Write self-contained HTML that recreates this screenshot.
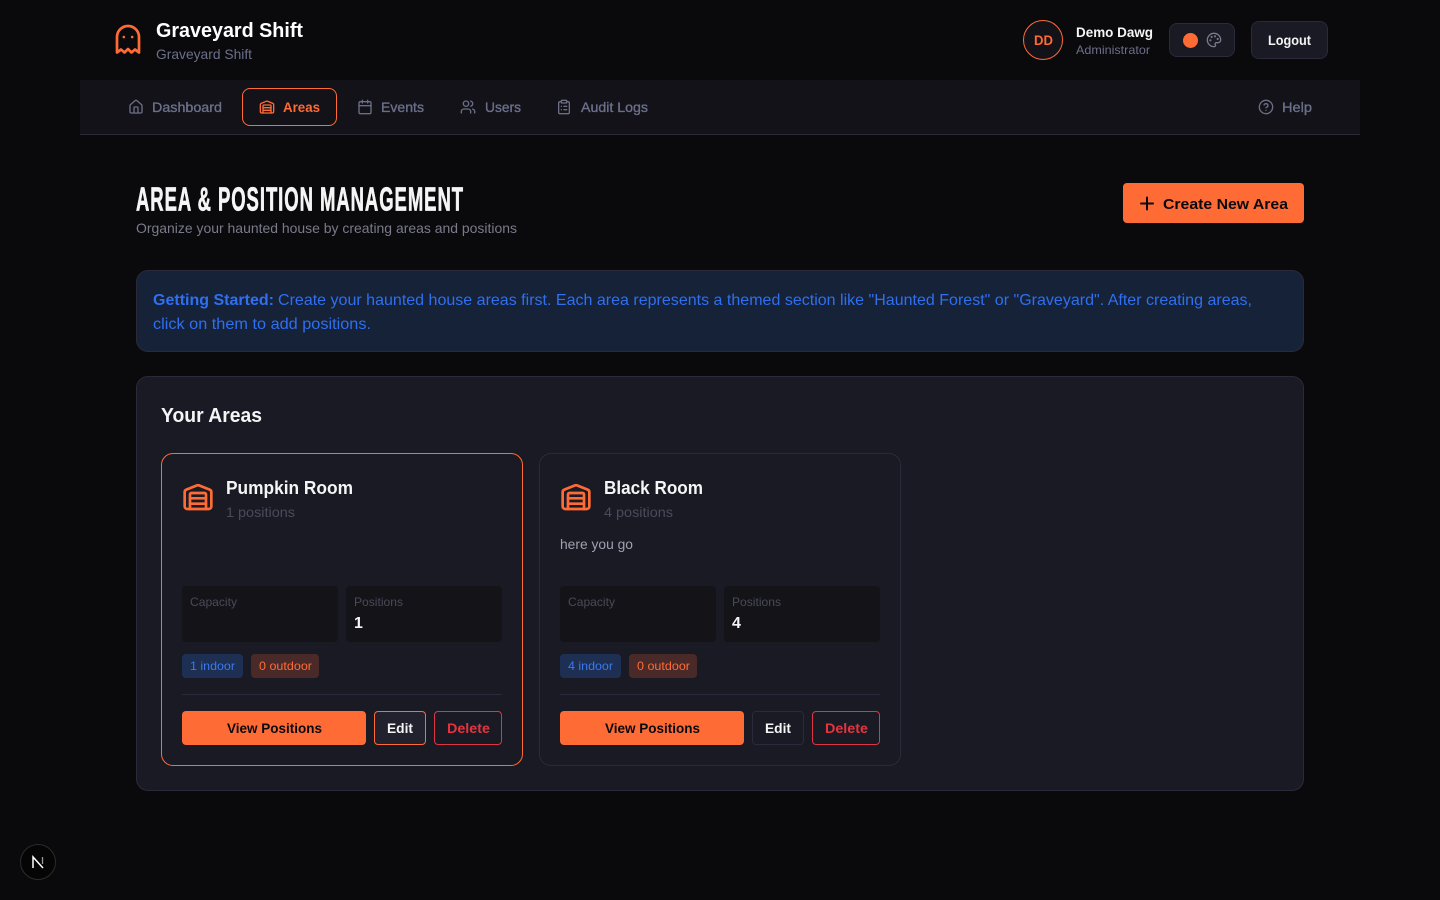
<!DOCTYPE html>
<html lang="en">
<head>
<meta charset="utf-8">
<title>Area &amp; Position Management - Graveyard Shift</title>
<style>
html,body{margin:0;padding:0;width:1440px;height:900px;overflow:hidden;background:#0a0a0c;font-family:"Liberation Sans",sans-serif}
.b{position:absolute;box-sizing:border-box}
svg{position:absolute;left:0;top:0}
text{font-family:"Liberation Sans",sans-serif;font-size:14px;white-space:pre}
.m{stroke-width:.35px}
.i{fill:none;stroke-width:2;stroke-linecap:round;stroke-linejoin:round}
</style>
</head>
<body>
<div class="b" style="left:80px;top:80px;width:1280px;height:55px;background:#121218;border-bottom:1px solid #2a2a3a"></div>
<div class="b" style="left:242px;top:88px;width:95px;height:38px;border:1px solid #ff6b35;border-radius:8px"></div>
<div class="b" style="left:1023px;top:20px;width:40px;height:40px;border:1px solid #ff6b35;border-radius:50%;background:#121218"></div>
<div class="b" style="left:1169px;top:23px;width:66px;height:34px;background:#1a1a24;border:1px solid #2a2a3a;border-radius:8px"></div>
<div class="b" style="left:1182.500px;top:32.500px;width:15px;height:15px;background:#ff6b35;border-radius:50%"></div>
<div class="b" style="left:1251px;top:21px;width:77px;height:38px;background:#1a1a24;border:1px solid #2a2a3a;border-radius:8px"></div>
<div class="b" style="left:1123px;top:183px;width:181px;height:40px;background:#ff6b35;border-radius:4px"></div>
<div class="b" style="left:136px;top:270px;width:1168px;height:82px;background:#152238;border:1px solid #2a2a3a;border-radius:12px"></div>
<div class="b" style="left:136px;top:376px;width:1168px;height:415px;background:#1a1a24;border:1px solid #2a2a3a;border-radius:12px"></div>

<div class="b" style="left:161px;top:453px;width:362px;height:313px;background:#1a1a24;border:1px solid #ff6b35;border-radius:12px"></div>
<div class="b" style="left:182px;top:586px;width:156px;height:56px;background:#131318;border-radius:4px"></div>
<div class="b" style="left:346px;top:586px;width:156px;height:56px;background:#131318;border-radius:4px"></div>
<div class="b" style="left:182px;top:654px;width:61px;height:24px;background:#1d2f52;border-radius:4px"></div>
<div class="b" style="left:251px;top:654px;width:68px;height:24px;background:#4a2a28;border-radius:4px"></div>
<div class="b" style="left:182px;top:694px;width:320px;height:1px;background:#2a2a3a"></div>
<div class="b" style="left:182px;top:711px;width:184px;height:34px;background:#ff6b35;border-radius:4px"></div>
<div class="b" style="left:374px;top:711px;width:52px;height:34px;background:#22222e;border:1px solid #ff6b35;border-radius:4px"></div>
<div class="b" style="left:434px;top:711px;width:68px;height:34px;border:1px solid #dc3545;border-radius:4px"></div>

<div class="b" style="left:539px;top:453px;width:362px;height:313px;background:#1a1a24;border:1px solid #2a2a3a;border-radius:12px"></div>
<div class="b" style="left:560px;top:586px;width:156px;height:56px;background:#131318;border-radius:4px"></div>
<div class="b" style="left:724px;top:586px;width:156px;height:56px;background:#131318;border-radius:4px"></div>
<div class="b" style="left:560px;top:654px;width:61px;height:24px;background:#1d2f52;border-radius:4px"></div>
<div class="b" style="left:629px;top:654px;width:68px;height:24px;background:#4a2a28;border-radius:4px"></div>
<div class="b" style="left:560px;top:694px;width:320px;height:1px;background:#2a2a3a"></div>
<div class="b" style="left:560px;top:711px;width:184px;height:34px;background:#ff6b35;border-radius:4px"></div>
<div class="b" style="left:752px;top:711px;width:52px;height:34px;border:1px solid #2a2a3a;border-radius:4px"></div>
<div class="b" style="left:812px;top:711px;width:68px;height:34px;border:1px solid #dc3545;border-radius:4px"></div>

<div class="b" style="left:20px;top:844px;width:36px;height:36px;background:#050505;border:1px solid #2c2c2c;border-radius:50%"></div>

<svg width="1440" height="900" viewBox="0 0 1440 900" xmlns="http://www.w3.org/2000/svg">
<!-- logo -->
<g class="i" stroke="#ff6b35" style="stroke-width:2.700">
<path d="M117 52.500V37a11 11 0 0 1 22 0V52.500L135 49.500 131.500 52.500 128 49 124.500 52.500 121 49.500Z"/>
</g>
<circle cx="123.800" cy="37" r="1.300" fill="#ff6b35"/><circle cx="132.200" cy="37" r="1.300" fill="#ff6b35"/>
<text x="156" y="37" style="font-size:20px;font-weight:bold" fill="#fff" textLength="147" lengthAdjust="spacingAndGlyphs">Graveyard Shift</text>
<text x="156" y="59" fill="#6b6f8a" textLength="96" lengthAdjust="spacingAndGlyphs">Graveyard Shift</text>

<!-- user -->
<text x="1034" y="45" style="font-weight:bold" fill="#ff6b35" textLength="19" lengthAdjust="spacingAndGlyphs">DD</text>
<text x="1076" y="37" style="font-weight:bold" fill="#f5f5f5" textLength="77" lengthAdjust="spacingAndGlyphs">Demo Dawg</text>
<text x="1076" y="54" style="font-size:12px" fill="#6b6f8a" textLength="74" lengthAdjust="spacingAndGlyphs">Administrator</text>
<g transform="translate(1206 32) scale(.6667)" class="i" stroke="#7a7a8c">
<path d="M12 22a10 10 0 1 1 10-10c0 2.800-2.200 4-4.500 4H15.500a2 2 0 0 0-1.500 3.300c.6.800.3 2.700-2 2.700z"/>
<circle cx="13.500" cy="6.500" r=".6" fill="#7a7a8c"/><circle cx="17.500" cy="10.500" r=".6" fill="#7a7a8c"/><circle cx="6.500" cy="12.500" r=".6" fill="#7a7a8c"/><circle cx="8.500" cy="7.500" r=".6" fill="#7a7a8c"/>
</g>
<text x="1268" y="45" style="font-weight:bold" fill="#f5f5f5" textLength="43" lengthAdjust="spacingAndGlyphs">Logout</text>

<!-- nav -->
<g transform="translate(128 99) scale(.6667)" class="i" stroke="#6b6f85"><path d="M15 21v-8a1 1 0 0 0-1-1h-4a1 1 0 0 0-1 1v8"/><path d="M3 10a2 2 0 0 1 .7-1.500l7-6a2 2 0 0 1 2.600 0l7 6a2 2 0 0 1 .7 1.500v9a2 2 0 0 1-2 2H5a2 2 0 0 1-2-2z"/></g>
<text class="m" x="152" y="112" fill="#6b6f8a" stroke="#6b6f8a" textLength="70" lengthAdjust="spacingAndGlyphs">Dashboard</text>
<g transform="translate(259 99) scale(.6667)" class="i" stroke="#ff6b35"><path d="M18 21V10a1 1 0 0 0-1-1H7a1 1 0 0 0-1 1v11"/><path d="M22 19a2 2 0 0 1-2 2H4a2 2 0 0 1-2-2V8.350a2 2 0 0 1 1.260-1.860l8-3.200a2 2 0 0 1 1.480 0l8 3.200A2 2 0 0 1 22 8.350z"/><path d="M6 13h12"/><path d="M6 17h12"/></g>
<text x="283" y="112" style="font-weight:bold" fill="#ff6b35" textLength="37" lengthAdjust="spacingAndGlyphs">Areas</text>
<g transform="translate(357 99) scale(.6667)" class="i" stroke="#6b6f85"><path d="M8 2v4"/><path d="M16 2v4"/><rect x="3" y="4" width="18" height="18" rx="2"/><path d="M3 10h18"/></g>
<text class="m" x="381" y="112" fill="#6b6f8a" stroke="#6b6f8a" textLength="43" lengthAdjust="spacingAndGlyphs">Events</text>
<g transform="translate(460 99) scale(.6667)" class="i" stroke="#6b6f85"><path d="M16 21v-2a4 4 0 0 0-4-4H6a4 4 0 0 0-4 4v2"/><circle cx="9" cy="7" r="4"/><path d="M22 21v-2a4 4 0 0 0-3-3.870"/><path d="M16 3.130a4 4 0 0 1 0 7.750"/></g>
<text class="m" x="485" y="112" fill="#6b6f8a" stroke="#6b6f8a" textLength="36" lengthAdjust="spacingAndGlyphs">Users</text>
<g transform="translate(556 99) scale(.6667)" class="i" stroke="#6b6f85"><rect x="8" y="2" width="8" height="4" rx="1"/><path d="M16 4h2a2 2 0 0 1 2 2v14a2 2 0 0 1-2 2H6a2 2 0 0 1-2-2V6a2 2 0 0 1 2-2h2"/><path d="M12 11h4"/><path d="M12 16h4"/><path d="M8 11h.01"/><path d="M8 16h.01"/></g>
<text class="m" x="581" y="112" fill="#6b6f8a" stroke="#6b6f8a" textLength="67" lengthAdjust="spacingAndGlyphs">Audit Logs</text>
<g transform="translate(1258 99) scale(.6667)" class="i" stroke="#6b6f85"><circle cx="12" cy="12" r="10"/><path d="M9.090 9a3 3 0 0 1 5.830 1c0 2-3 3-3 3"/><path d="M12 17h.01"/></g>
<text class="m" x="1282" y="112" fill="#6b6f8a" stroke="#6b6f8a" textLength="30" lengthAdjust="spacingAndGlyphs">Help</text>

<!-- heading -->
<text transform="translate(136 210.300) scale(.56 1)" x="0" y="0" style="font-size:33px;font-weight:bold;stroke-width:.7px" fill="#f5f5f5" stroke="#f5f5f5" textLength="584" lengthAdjust="spacing">AREA &amp; POSITION MANAGEMENT</text>
<text x="136" y="233" fill="#7a7a8c" textLength="381" lengthAdjust="spacingAndGlyphs">Organize your haunted house by creating areas and positions</text>
<path d="M1147 197.500v12M1141 203.500h12" stroke="#0a0a0f" stroke-width="2" stroke-linecap="round" fill="none"/>
<text x="1163" y="209" style="font-size:15px;font-weight:bold" fill="#0a0a0f" textLength="125" lengthAdjust="spacingAndGlyphs">Create New Area</text>

<!-- banner -->
<text x="153" y="305" style="font-size:16px;font-weight:bold" fill="#2f6ff0" textLength="121" lengthAdjust="spacingAndGlyphs">Getting Started:</text>
<text x="278" y="305" style="font-size:16px" fill="#2f6ff0" textLength="974" lengthAdjust="spacingAndGlyphs">Create your haunted house areas first. Each area represents a themed section like "Haunted Forest" or "Graveyard". After creating areas,</text>
<text x="153" y="329" style="font-size:16px" fill="#2f6ff0" textLength="218" lengthAdjust="spacingAndGlyphs">click on them to add positions.</text>

<text x="161" y="422" style="font-size:20px;font-weight:bold" fill="#f5f5f5" textLength="101" lengthAdjust="spacingAndGlyphs">Your Areas</text>

<!-- card 1 -->
<g transform="translate(182 481) scale(1.3333)" class="i" stroke="#ff6b35"><path d="M18 21V10a1 1 0 0 0-1-1H7a1 1 0 0 0-1 1v11"/><path d="M22 19a2 2 0 0 1-2 2H4a2 2 0 0 1-2-2V8.350a2 2 0 0 1 1.260-1.860l8-3.200a2 2 0 0 1 1.480 0l8 3.200A2 2 0 0 1 22 8.350z"/><path d="M6 13h12"/><path d="M6 17h12"/></g>
<text x="226" y="494" style="font-size:18px;font-weight:bold" fill="#f5f5f5" textLength="127" lengthAdjust="spacingAndGlyphs">Pumpkin Room</text>
<text x="226" y="517" fill="#4a4a5a" textLength="69" lengthAdjust="spacingAndGlyphs">1 positions</text>
<text x="190" y="606" style="font-size:12px" fill="#4a4a5a" textLength="47" lengthAdjust="spacingAndGlyphs">Capacity</text>
<text x="354" y="606" style="font-size:12px" fill="#4a4a5a" textLength="49" lengthAdjust="spacingAndGlyphs">Positions</text>
<text x="354" y="628" style="font-size:16px;font-weight:bold" fill="#f5f5f5">1</text>
<text x="190" y="670" style="font-size:12px" fill="#3b78f0" textLength="45" lengthAdjust="spacingAndGlyphs">1 indoor</text>
<text x="259" y="670" style="font-size:12px" fill="#ff6b35" textLength="53" lengthAdjust="spacingAndGlyphs">0 outdoor</text>
<text x="227" y="733" style="font-weight:bold" fill="#0a0a0f" textLength="95" lengthAdjust="spacingAndGlyphs">View Positions</text>
<text x="387" y="733" style="font-weight:bold" fill="#f5f5f5" textLength="26" lengthAdjust="spacingAndGlyphs">Edit</text>
<text x="447" y="733" style="font-weight:bold" fill="#e5343f" textLength="43" lengthAdjust="spacingAndGlyphs">Delete</text>

<!-- card 2 -->
<g transform="translate(560 481) scale(1.3333)" class="i" stroke="#ff6b35"><path d="M18 21V10a1 1 0 0 0-1-1H7a1 1 0 0 0-1 1v11"/><path d="M22 19a2 2 0 0 1-2 2H4a2 2 0 0 1-2-2V8.350a2 2 0 0 1 1.260-1.860l8-3.200a2 2 0 0 1 1.480 0l8 3.200A2 2 0 0 1 22 8.350z"/><path d="M6 13h12"/><path d="M6 17h12"/></g>
<text x="604" y="494" style="font-size:18px;font-weight:bold" fill="#f5f5f5" textLength="99" lengthAdjust="spacingAndGlyphs">Black Room</text>
<text x="604" y="517" fill="#4a4a5a" textLength="69" lengthAdjust="spacingAndGlyphs">4 positions</text>
<text x="560" y="549" fill="#a0a0b0" textLength="73" lengthAdjust="spacingAndGlyphs">here you go</text>
<text x="568" y="606" style="font-size:12px" fill="#4a4a5a" textLength="47" lengthAdjust="spacingAndGlyphs">Capacity</text>
<text x="732" y="606" style="font-size:12px" fill="#4a4a5a" textLength="49" lengthAdjust="spacingAndGlyphs">Positions</text>
<text x="732" y="628" style="font-size:16px;font-weight:bold" fill="#f5f5f5">4</text>
<text x="568" y="670" style="font-size:12px" fill="#3b78f0" textLength="45" lengthAdjust="spacingAndGlyphs">4 indoor</text>
<text x="637" y="670" style="font-size:12px" fill="#ff6b35" textLength="53" lengthAdjust="spacingAndGlyphs">0 outdoor</text>
<text x="605" y="733" style="font-weight:bold" fill="#0a0a0f" textLength="95" lengthAdjust="spacingAndGlyphs">View Positions</text>
<text x="765" y="733" style="font-weight:bold" fill="#f5f5f5" textLength="26" lengthAdjust="spacingAndGlyphs">Edit</text>
<text x="825" y="733" style="font-weight:bold" fill="#e5343f" textLength="43" lengthAdjust="spacingAndGlyphs">Delete</text>

<!-- dev indicator -->
<path d="M33 868V857L43 868" fill="none" stroke="#fff" stroke-width="1.500"/><path d="M42.500 857v7" fill="none" stroke="#999" stroke-width="1.300"/>
</svg>
</body>
</html>
